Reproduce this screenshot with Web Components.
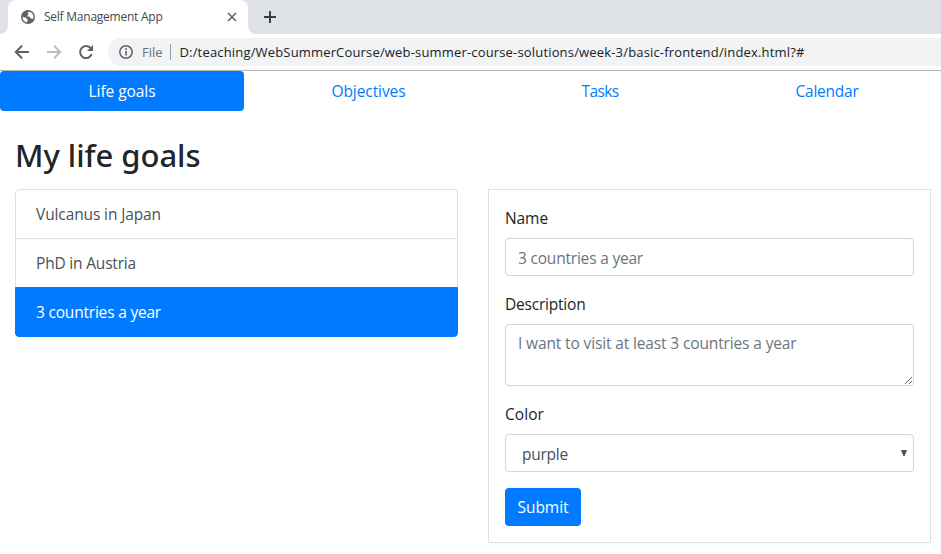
<!DOCTYPE html>
<html lang="en"><head><meta charset="utf-8"><title>Self Management App</title>
<style>
body{margin:0;width:941px;height:554px;overflow:hidden;background:#fff;color:#212529;font:15.5px/24px "Open Sans","Noto Sans",sans-serif}
</style></head><body>
<app-window></app-window>
<script>
const ctx = document.createElement('canvas').getContext('2d');
// Letter spacing that gives a text the wanted width in the element's own font.
function spacing(el, text, width){
  const s = getComputedStyle(el);
  ctx.font = `${s.fontWeight} ${s.fontSize} ${s.fontFamily}`;
  return (width - ctx.measureText(text).width) / text.length + 'px';
}
class Base extends HTMLElement{
  constructor(){ super(); this.attachShadow({mode:'open'}).innerHTML = this.constructor.html; }
  $(q){ return this.shadowRoot.querySelector(q); }
}
class TextRun extends Base{
  static html = `<style>:host{display:inline-block;white-space:nowrap}</style><slot></slot>`;
  connectedCallback(){ this.style.letterSpacing = spacing(this, this.textContent, +this.getAttribute('w')); }
}
class BrowserTabs extends Base{
  static html = `<style>
  :host{display:flex;height:34px;background:#dee1e6;font-size:12px;line-height:34px;color:#45494d}
  .edge{width:8px;background:#fff}.edge i{display:block;height:34px;background:#dee1e6}
  .l i{border-radius:0 0 8px 0}.r i{border-radius:0 0 0 8px}
  .tab{box-sizing:border-box;width:240px;background:#fff;border-radius:8px 8px 0 0;display:flex;align-items:center;padding:0 11px 0 13px}
  text-run{margin-left:9px;flex:1}
  svg{display:block;flex:none}.plus{margin:10px 0 0 7px}
  </style><div class="edge l"><i></i></div><div class="tab">
  <svg width="14" height="14" viewBox="0 0 14 14"><circle cx="7" cy="7" r="7" fill="#5f6368"/><path d="M8.200 1.700C7 2.200 6.300 3.200 7.100 3.900c.8.600 0 1.400-.8 1.800-.4.500.3 1 1.100.9 1.300-.2 1.600.6 1.800 1.300.5.800 1.300.3 1.900.7.700.5 1.100.2 1.300-.2C13.100 5 11 2.300 8.200 1.700zM1.600 6.400c.8.900 2 1 2.900 1.100 1 .1.700 1.200 1.600 1.600 1 .4.400 1.400.3 2 0 .5-.3 1-.7 1.200C3 11.600 1.200 9.200 1.600 6.400z" fill="#fff"/></svg>
  <text-run w="118.500">Self Management App</text-run>
  <svg width="10" height="10" viewBox="0 0 10 10" stroke="#5f6368" stroke-width="1.600"><path d="M1 1l8 8M9 1L1 9"/></svg></div>
  <div class="edge r"><i></i></div>
  <svg class="plus" width="14" height="14" viewBox="0 0 14 14" stroke="#3c4043" stroke-width="2"><path d="M7 1v12M1 7h12"/></svg>`;
}
class AddressBar extends Base{
  static html = `<style>
  :host{display:flex;box-sizing:border-box;height:37px;padding:4px 0 4px 14px;border-bottom:1px solid #b4b4b4;background:#fff;font-size:13px;line-height:28px}
  svg{display:block;flex:none;fill:none}.nav{margin:6px 16px 0 0}
  .reload{margin-right:14px}
  .url{flex:1;display:flex;align-items:center;height:28px;border-radius:14px 0 0 14px;background:#f1f3f4;padding-left:11px;color:#202124}
  .file{margin-left:9px;color:#6b6f73}.bar{width:1px;height:16px;background:#9aa0a6;margin:0 9px 0 7px}
  </style>
  <svg class="nav" width="16" height="16" viewBox="0 0 16 16" stroke="#5f6368" stroke-width="2"><path d="M15 8H2.500M8 1.800L1.800 8 8 14.200"/></svg>
  <svg class="nav" width="16" height="16" viewBox="0 0 16 16" stroke="#babcbe" stroke-width="2"><path d="M1 8h12.500M8 1.800L14.200 8 8 14.200"/></svg>
  <svg class="nav reload" width="16" height="16" viewBox="0 0 16 16"><path d="M13.700 10.200A6 6 0 1 1 12.500 4" stroke="#5f6368" stroke-width="2"/><path d="M15 1v6H9z" fill="#5f6368"/></svg>
  <div class="url"><svg width="14" height="14" viewBox="0 0 14 14" stroke="#5f6368"><circle cx="7" cy="7" r="6.200" stroke-width="1.500"/><path d="M7 6v4.500M7 3.300v1.600" stroke-width="1.600"/></svg>
  <text-run class="file" w="20.500">File</text-run><i class="bar"></i>
  <text-run w="625">D:/teaching/WebSummerCourse/web-summer-course-solutions/week-3/basic-frontend/index.html?#</text-run></div>`;
}
class NavPills extends Base{
  static html = `<style>
  :host{display:grid;grid-template-columns:244px 249px 214px 240px;height:40px;text-align:center;color:#007bff}
  div{padding:8px 0}.on{background:#007bff;color:#fff;border-radius:4px}
  </style><div class="on"><text-run w="67">Life goals</text-run></div><div><text-run w="74">Objectives</text-run></div><div><text-run w="37">Tasks</text-run></div><div><text-run w="63">Calendar</text-run></div>`;
}
class GoalItem extends Base{
  static html = `<style>
  :host{display:block;box-sizing:border-box;height:50px;padding:12px 20px;border:1px solid #dfdfdf;margin-bottom:-1px;color:#495057;background:#fff}
  :host(:first-child){border-radius:4px 4px 0 0}
  :host([active]){background:#007bff;border-color:#007bff;color:#fff;border-radius:0 0 4px 4px;position:relative}
  </style><slot></slot>`;
}
class FormField extends Base{
  static html = `<style>
  :host{display:block;margin-bottom:16px}
  label{display:block;height:24px;margin-bottom:8px}
  .box{display:grid}
  input,textarea,select{grid-area:1/1;display:block;box-sizing:border-box;width:100%;height:38px;margin:0;padding:8px 12px 6px;border:1px solid #ced4da;border-radius:4px;background:#fff;color:#495057;font:inherit;line-height:24px;outline:0}
  textarea{height:62px;padding:6px 12px;resize:vertical;overflow:hidden}
  select{appearance:none;padding:7px 16px 5px}
  ::placeholder{color:#6c757d;opacity:1}
  svg{grid-area:1/1;justify-self:end;align-self:center;margin:0 7px 1px 0;pointer-events:none}
  </style><label></label><div class="box"></div>`;
  connectedCallback(){
    const a = n => this.getAttribute(n), label = this.$('label'), box = this.$('.box');
    label.textContent = a('label');
    label.style.letterSpacing = spacing(label, a('label'), +a('lw'));
    const c = document.createElement(a('kind'));
    if (a('kind') === 'select') c.add(new Option(a('value'))); else c.placeholder = a('value');
    box.append(c);
    c.style.letterSpacing = spacing(c, a('value'), +a('vw'));
    if (a('kind') === 'select') box.insertAdjacentHTML('beforeend', '<svg width="6" height="6" viewBox="0 0 6 6"><path d="M0 0h6L3.600 6H2.400z" fill="#495057"/></svg>');
  }
}
class SubmitButton extends Base{
  static html = `<style>:host{display:block}button{display:block;width:76px;height:38px;padding:0;border:0;border-radius:4px;background:#007bff;color:#fff;font:inherit;line-height:38px}</style><button><slot></slot></button>`;
}
class AppWindow extends Base{
  static html = `<style>
  :host{display:block}
  h2{margin:22px 0 0 15px;height:56px;font:500 31px/44px "Noto Sans","Open Sans",sans-serif}
  main{display:grid;grid-template-columns:443px 443px;gap:30px;padding-left:15px;align-items:start}
  form{box-sizing:border-box;height:354px;border:1px solid #dfdfdf;padding:16px}
  </style><browser-tabs></browser-tabs><address-bar></address-bar><nav-pills></nav-pills>
  <h2><text-run w="185.500">My life goals</text-run></h2>
  <main><section><goal-item><text-run w="125">Vulcanus in Japan</text-run></goal-item><goal-item><text-run w="100">PhD in Austria</text-run></goal-item><goal-item active><text-run w="125">3 countries a year</text-run></goal-item></section>
  <form><form-field kind="input" label="Name" lw="43" value="3 countries a year" vw="125"></form-field>
  <form-field kind="textarea" label="Description" lw="80.500" value="I want to visit at least 3 countries a year" vw="278.500"></form-field>
  <form-field kind="select" label="Color" lw="39" value="purple" vw="46"></form-field>
  <submit-button><text-run w="51">Submit</text-run></submit-button></form></main>`;
}
for (const [n, c] of Object.entries({'text-run':TextRun,'browser-tabs':BrowserTabs,'address-bar':AddressBar,'nav-pills':NavPills,'goal-item':GoalItem,'form-field':FormField,'submit-button':SubmitButton,'app-window':AppWindow})) customElements.define(n, c);
</script></body></html>
